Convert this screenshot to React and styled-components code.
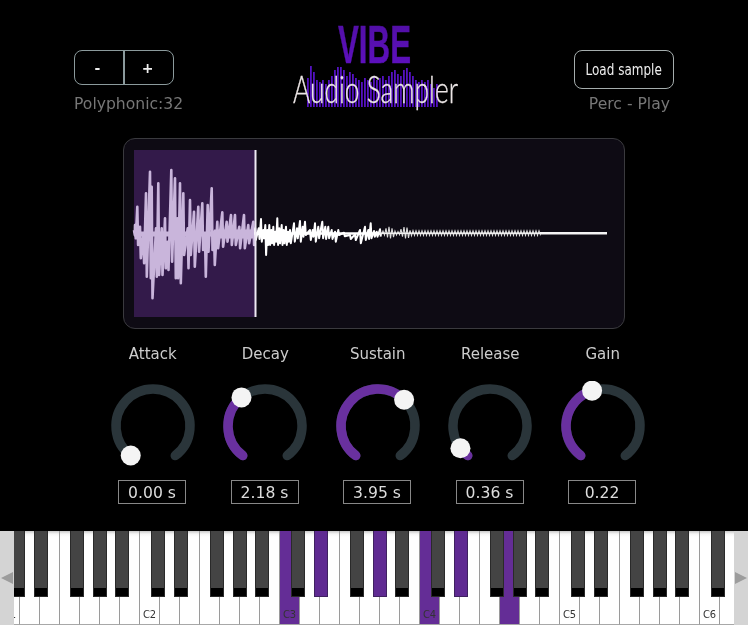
import React from 'react'
import styled, { createGlobalStyle } from 'styled-components'

const GlobalStyle = createGlobalStyle`
  html, body {
    margin: 0;
    background: #000;
  }
`

const Root = styled.div`
  width: 748px;
  height: 625px;
  background: #000;
  display: flex;
  flex-direction: column;
  overflow: hidden;
  font-family: "DejaVu Sans", sans-serif;
  filter: blur(0.35px);
`

const Header = styled.div`
  height: 138px;
  display: grid;
  grid-template-columns: 285px 180px 1fr;
  flex-shrink: 0;
`

const LeftCol = styled.div`
  padding: 50px 0 0 74px;
`

const RightCol = styled.div`
  padding: 50px 74px 0 0;
  display: flex;
  flex-direction: column;
  align-items: flex-end;
`

const ButtonGroup = styled.div`
  width: 98px;
  height: 33px;
  display: flex;
  border: 1px solid #8b9a9c;
  border-radius: 8px;
`

const StepButton = styled.div`
  flex: 1;
  display: flex;
  align-items: center;
  justify-content: center;
  padding-right: 3px;
  color: #eee;
  font-size: 14px;
  font-weight: bold;
  & + & {
    border-left: 2px solid #8b9a9c;
  }
`

const LoadButton = styled.div`
  width: 98px;
  height: 35px;
  padding-top: 2px;
  display: flex;
  align-items: center;
  justify-content: center;
  border: 1px solid #a5adad;
  border-radius: 8px;
  color: #eee;
  font-size: 15px;
  white-space: nowrap;
`

const LoadLabel = styled.span`
  display: inline-block;
  margin-top: -1px;
  transform: scaleX(0.8);
`

const Caption = styled.div`
  margin-top: ${({ $top }) => $top}px;
  margin-right: ${({ $right }) => $right || 0}px;
  color: #777;
  font-size: 15.6px;
  line-height: 18px;
  white-space: nowrap;
`

const LogoSvg = styled.svg`
  display: block;
  margin-top: 20px;
`

const WavePanel = styled.div`
  margin-left: 123px;
  width: 500px;
  height: 189px;
  flex-shrink: 0;
  border: 1px solid #3a3a3e;
  border-radius: 12px;
  background: #0e0b14;
  overflow: hidden;
`

const WaveSvg = styled.svg`
  display: block;
`

const Knobs = styled.div`
  margin-left: 96.5px;
  padding-top: 16px;
  display: grid;
  grid-template-columns: repeat(5, 112.5px);
`

const KnobCol = styled.div`
  display: flex;
  flex-direction: column;
  align-items: center;
`

const KnobLabel = styled.div`
  color: #ccc;
  font-size: 15px;
  line-height: 18px;
`

const KnobSvg = styled.svg`
  display: block;
  margin: 18px 0 9px;
`

const ValueBox = styled.div`
  width: 66px;
  height: 22px;
  margin-right: 1.5px;
  border: 1px solid #888;
  color: #ddd;
  font-size: 15.6px;
  line-height: 24px;
  text-align: center;
`

const Keyboard = styled.div`
  position: relative;
  margin-top: auto;
  height: 94px;
  flex-shrink: 0;
  display: flex;
  overflow: hidden;
  background: #fff;
`

const WhiteKey = styled.div`
  width: 20px;
  flex-shrink: 0;
  box-sizing: border-box;
  display: flex;
  align-items: flex-end;
  justify-content: center;
  padding-bottom: 1px;
  border-right: 1px solid #9a9a9a;
  border-bottom: 1px solid #a8a8a8;
  background: ${({ $on }) => ($on
    ? '#642d96'
    : 'linear-gradient(#c8c8c8 0, #f6f6f6 3px, #fff 6px)')};
  color: #333;
  font-family: "DejaVu Sans Condensed", "DejaVu Sans", sans-serif;
  font-size: 11px;
  line-height: 16px;
`

const BlackKey = styled.div`
  position: absolute;
  top: 0;
  height: 66px;
  width: 14px;
  box-sizing: border-box;
  border: 1px solid ${({ $on }) => ($on ? '#3f2260' : '#2a2a2a')};
  border-top: 0;
  background: ${({ $on }) => ($on ? '#5f2a92' : 'linear-gradient(#444 0, #444 57px, #000 57px)')};
`

const SidePanel = styled.div`
  position: absolute;
  top: 0;
  bottom: 0;
  ${({ $side }) => ($side === 'left' ? 'left: 0;' : 'right: 0;')}
  width: 14px;
  background: #d4d4d4;
  display: flex;
  align-items: center;
  justify-content: center;
`

const Arrow = styled.div`
  width: 0;
  height: 0;
  border-top: 6px solid transparent;
  border-bottom: 6px solid transparent;
  ${({ $side }) => ($side === 'left'
    ? 'border-right: 12px solid #9c9c9c;'
    : 'border-left: 12px solid #9c9c9c;')}
`

// [x, top, bottom] read off the reference at 3x, around the sample start
const PEAKS = [
  [42, 285, 300], [45, 270, 310], [52, 215, 330], [60, 275, 370], [70, 300, 385], [78, 175, 425],
  [90, 110, 430], [95, 155, 490], [108, 280, 425], [115, 145, 420], [125, 280, 420], [135, 250, 400],
  [143, 320, 405], [154, 105, 380], [165, 130, 430], [172, 250, 430], [180, 145, 445], [190, 175, 360],
  [203, 280, 400], [210, 195, 360], [222, 230, 395], [235, 215, 350], [247, 205, 345], [255, 300, 425],
  [263, 210, 350], [275, 160, 345], [282, 290, 390], [292, 260, 340], [307, 232, 335], [320, 260, 320],
  [333, 240, 330], [345, 240, 330], [358, 275, 340], [372, 240, 340], [385, 270, 325], [400, 260, 330],
  [405, 280, 315],
]

const PEAKS_AFTER = [
  [405, 280, 315], [416, 280, 312], [423, 252, 320], [430, 285, 310], [436, 270, 360], [442, 285, 330],
  [448, 270, 330], [454, 285, 325], [460, 275, 330], [466, 290, 320], [472, 250, 330], [478, 280, 325],
  [485, 270, 330], [491, 285, 325], [498, 275, 330], [504, 290, 320], [510, 285, 325], [522, 265, 320],
  [531, 280, 310], [540, 258, 320], [548, 275, 305], [555, 260, 300], [570, 285, 315], [578, 285, 305],
  [585, 265, 320], [595, 275, 310], [607, 260, 310], [616, 275, 312], [625, 275, 310], [635, 285, 312],
  [645, 290, 320], [655, 285, 300], [672, 293, 304], [690, 300, 312], [705, 298, 315], [720, 285, 325],
  [735, 275, 315], [745, 285, 312], [752, 265, 310], [762, 288, 305], [770, 290, 305], [780, 283, 305],
]

const toPath = (peaks) => peaks
  .map(([x, top, bottom], i) => {
    const px = (120 + x / 3 - 124).toFixed(1)
    const a = (135 + top / 3 - 139).toFixed(1)
    const b = (135 + bottom / 3 - 139).toFixed(1)
    return `${i === 0 ? 'M' : 'L'}${px} ${a}L${(Number(px) + 0.8).toFixed(1)} ${b}`
  })
  .join('')

// quiet tail of the sample, the amplitude dies out towards the end
const tailPath = () => {
  const mid = 94.3
  let d = `M${380 - 124} ${mid}`
  for (let x = 380; x < 540; x += 3) {
    const amp = x < 413 ? 4 + 2.5 * Math.sin(x * 1.7) : 2.6
    d += `L${x - 124} ${(mid - amp).toFixed(1)}L${x - 122.5} ${(mid + amp * 0.8).toFixed(1)}`
  }
  return d
}

const Waveform = () => (
  <WaveSvg width="500" height="189" viewBox="0 0 500 189">
    <rect x="10" y="11" width="121" height="167" fill="#331a4a" />
    <path d={toPath(PEAKS)} fill="none" stroke="#c9b5db" strokeWidth="2.6" strokeLinejoin="round" />
    <path d="M10 95 L90 95" stroke="#c9b5db" strokeWidth="5" />
    <path d="M90 95 L130 95" stroke="#c9b5db" strokeWidth="9" />
    <path d={toPath(PEAKS_AFTER)} fill="none" stroke="#fff" strokeWidth="2" strokeLinejoin="round" />
    <path d="M130 94.5 L256 94.5" stroke="#fff" strokeWidth="2.5" />
    <path d={tailPath()} fill="none" stroke="#ddd" strokeWidth="1.1" />
    <path d="M256 94.3 L416 94.3" stroke="#eee" strokeWidth="1.4" />
    <path d="M416 94.3 L483 94.3" stroke="#f4f4f4" strokeWidth="2.6" />
    <rect x="130.5" y="11" width="2" height="167" fill="#efeaf4" />
  </WaveSvg>
)

const BAR_TOPS = [
  [22, 58], [25, 46], [28, 52], [31, 60], [34, 62], [37, 60], [40, 64], [43, 60], [46, 56], [49, 50],
  [52, 47], [55, 47], [58, 50], [61, 56], [64, 52], [67, 54], [70, 58], [73, 60], [76, 62], [79, 58],
  [82, 60], [85, 62], [88, 56], [91, 60], [94, 58], [97, 56], [100, 60], [103, 56], [106, 52], [109, 50],
  [112, 54], [115, 56], [118, 50], [121, 48], [124, 52], [127, 56], [130, 60], [133, 62], [136, 60], [139, 62],
  [142, 60], [145, 64], [148, 68], [151, 64],
]

const Logo = () => (
  <LogoSvg width="180" height="100" viewBox="0 0 180 100">
    <defs>
      <linearGradient id="vibeFill" x1="0" y1="0" x2="0" y2="1">
        <stop offset="0" stopColor="#4f0fa0" />
        <stop offset="1" stopColor="#6010c4" />
      </linearGradient>
    </defs>
    <text
      x="53"
      y="43"
      fill="url(#vibeFill)"
      stroke="url(#vibeFill)"
      strokeWidth="0.5"
      fontFamily='"Liberation Sans", sans-serif'
      fontWeight="bold"
      fontSize="54"
      textLength="73"
      lengthAdjust="spacingAndGlyphs"
    >
      VIBE
    </text>
    {BAR_TOPS.map(([x, top]) => (
      <rect key={x} x={x} y={top} width="1.8" height={87 - top} fill="#5412c0" />
    ))}
    <text
      x="8"
      y="82.5"
      fill="#ece6e6"
      stroke="#ece6e6"
      strokeWidth="0.3"
      fontFamily='"Lato", "Open Sans", sans-serif'
      fontWeight="300"
      fontSize="37"
      textLength="165"
      lengthAdjust="spacingAndGlyphs"
    >
      Audio Sampler
    </text>
  </LogoSvg>
)

const KNOB_SWEEP = 143
const KNOB_R = 37

const polar = (deg) => {
  const rad = (deg * Math.PI) / 180
  return [45 + KNOB_R * Math.sin(rad), 45 - KNOB_R * Math.cos(rad)]
}

const arc = (from, to) => {
  const [x1, y1] = polar(from)
  const [x2, y2] = polar(to)
  const large = to - from > 180 ? 1 : 0
  return `M${x1.toFixed(2)} ${y1.toFixed(2)}A${KNOB_R} ${KNOB_R} 0 ${large} 1 ${x2.toFixed(2)} ${y2.toFixed(2)}`
}

const Knob = ({ label, value, fraction }) => {
  const angle = -KNOB_SWEEP + fraction * KNOB_SWEEP * 2
  const [hx, hy] = polar(angle)
  return (
    <KnobCol>
      <KnobLabel>{label}</KnobLabel>
      <KnobSvg width="90" height="90" viewBox="0 0 90 90">
        <path d={arc(-KNOB_SWEEP, KNOB_SWEEP)} fill="none" stroke="#2a353a" strokeWidth="9.5" strokeLinecap="round" />
        {fraction > 0 && (
          <path d={arc(-KNOB_SWEEP, angle)} fill="none" stroke="#69309f" strokeWidth="9.5" strokeLinecap="round" />
        )}
        <circle cx={hx} cy={hy} r="10" fill="#f4f4f4" />
      </KnobSvg>
      <ValueBox>{value}</ValueBox>
    </KnobCol>
  )
}

const KNOBS = [
  { label: 'Attack', value: '0.00 s', fraction: 0 },
  { label: 'Decay', value: '2.18 s', fraction: 0.362 },
  { label: 'Sustain', value: '3.95 s', fraction: 0.657 },
  { label: 'Release', value: '0.36 s', fraction: 0.056 },
  { label: 'Gain', value: '0.22', fraction: 0.44 },
]

const BLACK_OFFSETS = [10.7, 33.8, 69.7, 92.7, 115]
const ACTIVE_WHITE = new Set([14, 21, 25])
const ACTIVE_BLACK = new Set([11, 13, 16])

const whiteKeys = Array.from({ length: 38 }, (_, i) => ({
  index: i,
  label: i % 7 === 0 ? `C${i / 7 + 1}` : '',
}))

const blackKeys = []
for (let octave = 0; octave < 6; octave++) {
  BLACK_OFFSETS.forEach((offset) => {
    blackKeys.push({ index: blackKeys.length, x: octave * 140 + offset })
  })
}

const App = () => (
  <Root>
    <GlobalStyle />
    <Header>
      <LeftCol>
        <ButtonGroup>
          <StepButton>-</StepButton>
          <StepButton>+</StepButton>
        </ButtonGroup>
        <Caption $top={10}>Polyphonic:32</Caption>
      </LeftCol>
      <Logo />
      <RightCol>
        <LoadButton><LoadLabel>Load sample</LoadLabel></LoadButton>
        <Caption $top={6} $right={4}>Perc - Play</Caption>
      </RightCol>
    </Header>
    <WavePanel>
      <Waveform />
    </WavePanel>
    <Knobs>
      {KNOBS.map((knob) => <Knob key={knob.label} {...knob} />)}
    </Knobs>
    <Keyboard>
      {whiteKeys.map((key) => (
        <WhiteKey key={key.index} $on={ACTIVE_WHITE.has(key.index)}>{key.label}</WhiteKey>
      ))}
      {blackKeys.map((key) => (
        <BlackKey key={key.index} $on={ACTIVE_BLACK.has(key.index)} style={{ left: key.x }} />
      ))}
      <SidePanel $side="left"><Arrow $side="left" /></SidePanel>
      <SidePanel $side="right"><Arrow $side="right" /></SidePanel>
    </Keyboard>
  </Root>
)

export default App
